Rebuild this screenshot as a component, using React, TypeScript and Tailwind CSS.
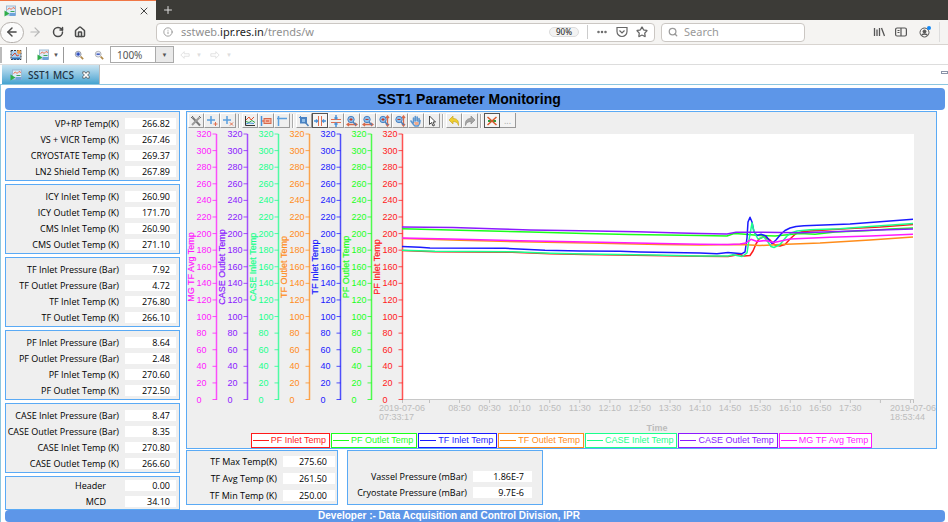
import { useState } from 'react';
import type { ReactNode } from 'react';
import { ArrowLeft, ArrowRight, RotateCw, House, Info, Ellipsis, Star, Search, Plus, X } from 'lucide-react';
import { clsx } from 'clsx';

const PANELS = [
  [['VP+RP Temp(K)', '266.82'], ['VS + VICR Temp (K)', '267.46'], ['CRYOSTATE Temp (K)', '269.37'], ['LN2 Shield Temp (K)', '267.89']],
  [['ICY Inlet Temp (K)', '260.90'], ['ICY Outlet Temp (K)', '171.70'], ['CMS Inlet Temp (K)', '260.90'], ['CMS Outlet Temp (K)', '271.10']],
  [['TF Inlet Pressure (Bar)', '7.92'], ['TF Outlet Pressure (Bar)', '4.72'], ['TF Inlet Temp (K)', '276.80'], ['TF Outlet Temp (K)', '266.10']],
  [['PF Inlet Pressure (Bar)', '8.64'], ['PF Outlet Pressure (Bar)', '2.48'], ['PF Inlet Temp (K)', '270.60'], ['PF Outlet Temp (K)', '272.50']],
  [['CASE Inlet Pressure (Bar)', '8.47'], ['CASE Outlet Pressure (Bar)', '8.35'], ['CASE Inlet Temp (K)', '270.80'], ['CASE Outlet Temp (K)', '266.60']],
];

// Traces are in the chart's own units, see the viewBox of <TrendChart>
const SERIES = [
  { name: 'PF Inlet Temp', color: '#ff1a1a', points: '402,250.5 435,251.7 512,252.2 550,253.7 585,254.5 652,255.5 700,256.3 728,256.6 735,255.2 740,254.5 744,256 750,255.5 753,251 756,244 759,239 764,236.5 770,240 775,245 780,246 785,244.5 790,239 796,233.500 802,231.800 810,231 850,228.5 880,227 913,224.5' },
  { name: 'PF Outlet Temp', color: '#1aff1a', points: '402,228.7 450,230 530,232 585,233.5 630,234.5 700,235.5 727,236 734,233.5 742,234 760,235.5 775,236 800,233.5 815,234.3 835,232 870,230.5 890,229 913,228' },
  { name: 'TF Inlet Temp', color: '#1a1aff', points: '402,246.5 420,247.3 430,248 505,248.3 545,250.3 580,251 620,251.3 640,252 700,252.9 717,253.7 728,252.5 742,253.7 745,252 747,238 748,222 750,217.3 752,222 754,232 757,235.5 761,234.3 766,236 769,240 772,243.5 776,240 781,234 785,230.500 790,228 796,226.500 804,225.700 850,224 870,222.5 890,221 913,219.3' },
  { name: 'TF Outlet Temp', color: '#ff8c1a', points: '402,238.6 460,240.2 520,241.8 600,243.2 660,244.4 700,245 740,244.5 760,245.5 780,244.5 820,243 870,240 913,237' },
  { name: 'CASE Inlet Temp', color: '#1aff8c', points: '402,250.3 435,251.3 512,251.8 550,253.3 585,254.1 652,255.1 700,256 728,256 733,254.7 742,256.5 747,253 749,240 752,223 754,232 758,239 764,237 768,242 771,246.500 774,247.5 780,244.5 787,236 791,233 797,231 810,229.7 840,228.8 870,226.5 913,223.5' },
  { name: 'CASE Outlet Temp', color: '#8c1aff', points: '402,227 427,227.3 453,227.6 500,229 530,230 580,230.7 637,231.7 680,233 700,233.5 727,234 736,232.3 760,232.3 800,232.8 840,231.4 870,230.3 913,229' },
  { name: 'MG TF Avg Temp', color: '#ff1aff', points: '402,238 450,239 520,240.8 600,242.3 660,243.5 700,244.3 728,244.6 740,244 746,243 751,239.3 757,241.5 765,240.5 774,242.5 790,239 830,237.3 870,236 913,234.3' },
];

const TEMPS = [0, 20, 40, 60, 80, 100, 120, 140, 160, 180, 200, 220, 240, 260, 280, 300, 320];
const TIMES = ['08:50', '09:30', '10:10', '10:50', '11:30', '12:10', '12:50', '13:30', '14:10', '14:50', '15:30', '16:10', '16:50', '17:30'];

const tempY = (t: number) => 399.5 - (t * 265.5) / 320;

function OpiIcon() {
  return (
    <svg viewBox="0 0 12 12" className="h-3 w-3 shrink-0">
      <rect x="2.500" y="1" width="9" height="9" fill="#dceaf7" stroke="#9db9d3" />
      <path d="M3.500 4.500 5.500 3l1.500 1.500 2-2 2 1" fill="none" stroke="#ee6a48" />
      <path d="M6.500 6.500h4" stroke="#3ba55c" />
      <rect x="5.500" y="8" width="6" height="3" fill="#6ea3da" />
      <path d="M0.500 5.500v6L5.500 8.500z" fill="#2fae4a" />
    </svg>
  );
}

function Reading({ label, value, id, box = 'w-[51px] pr-1.5' }: { label: string; value: string; id: string; box?: string }) {
  return (
    <div className="flex h-4 items-center justify-end gap-1.5">
      <label htmlFor={id} className="whitespace-nowrap">{label}</label>
      <input id={id} readOnly value={value} className={clsx('h-[11px] shrink-0 bg-white text-right outline-none', box)} />
    </div>
  );
}

function Zoomer({ sign, vertical }: { sign: string; vertical?: boolean }) {
  return (
    <>
      {vertical ? <path d="M9.500 1v10M8 3l1.500-2L11 3M8 9l1.500 2L11 9" stroke="#d8694b" strokeWidth="1.300" /> : <path d="M1 9.500h10M3 8 1 9.500 3 11M9 8l2 1.500L9 11" stroke="#d8694b" strokeWidth="1.300" />}
      <circle cx="5" cy="4.500" r="3.200" fill="#8fbde8" stroke="#4a83c4" />
      <path d="M7 7l3 3" stroke="#4a7fb8" strokeWidth="1.500" />
      <path d={sign === '+' ? 'M3.500 4.500h3M5 3v3' : 'M3.500 4.500h3'} stroke="#c0392b" />
    </>
  );
}

const TOOLS: { name: string; icon: ReactNode }[][] = [
  [
    { name: 'Configure', icon: <><path d="M2.500 2.500l7.500 8" stroke="#777" strokeWidth="2" /><path d="M9.500 2.500 2 10" stroke="#9a9a9a" strokeWidth="2" /><path d="M1 3l2-2M9 1l2 2" stroke="#666" /></> },
    { name: 'Add annotation', icon: <><path d="M5 1v8M1 5h8" stroke="#5aa0e0" strokeWidth="1.500" /><path d="M9.500 7v4M7.500 9h4" stroke="#e2704f" /></> },
    { name: 'Remove annotation', icon: <><path d="M5 1v8M1 5h8" stroke="#5aa0e0" strokeWidth="1.500" /><path d="M8 7.500l3 3M11 7.500l-3 3" stroke="#e2704f" /></> },
  ],
  [
    { name: 'Legend', icon: <><path d="M1.500 1v9.500H11" stroke="#333" /><path d="M2 5l3-3 2 3 3-3" stroke="#e2502c" /><path d="M2 6.500l3 1 3-2 3 2" stroke="#2fae4a" /><path d="M2 9l3-1 5 .500" stroke="#4a93d9" /></> },
    { name: 'Auto scale', icon: <><path d="M1.500 1v10" stroke="#4a93d9" strokeWidth="1.500" /><rect x="4" y="3.500" width="7" height="5" fill="#f3b29f" stroke="#d8694b" /><path d="M2 6h2M6 6h3" stroke="#d8492b" /></> },
    { name: 'Axes', icon: <path d="M2.500 1v10M1 3.500h10" stroke="#5aa0e0" strokeWidth="1.500" /> },
  ],
  [
    { name: 'Rubberband zoom', icon: <><path d="M1 2.500h7M2.500 1v7M8.500 2v6H2" stroke="#4a83c4" /><rect x="3.500" y="3.500" width="4" height="4" fill="#8fbde8" stroke="#4a83c4" /><path d="M7 7l3.500 4" stroke="#4a7fb8" strokeWidth="1.500" /></> },
    { name: 'Horizontal zoom', icon: <><path d="M4.500 1v10M7.500 1v10" stroke="#e2704f" /><path d="M0 6h3M2 4.500 3.500 6 2 7.500M12 6H9M10 4.500 8.500 6 10 7.500" stroke="#4a93d9" strokeWidth="1.500" /></> },
    { name: 'Vertical zoom', icon: <><path d="M1 4.500h10M1 7.500h10" stroke="#e2704f" /><path d="M6 0v4M4.500 2.500 6 4l1.500-1.500M6 12V8M4.500 9.500 6 8l1.500 1.500" stroke="#4a93d9" strokeWidth="1.500" /></> },
    { name: 'Zoom in horizontally', icon: <Zoomer sign="+" /> },
    { name: 'Zoom out horizontally', icon: <Zoomer sign="-" /> },
    { name: 'Zoom in vertically', icon: <Zoomer sign="+" vertical /> },
    { name: 'Zoom out vertically', icon: <Zoomer sign="-" vertical /> },
    { name: 'Pan', icon: <><path d="M3.500 7.500V3M5.300 6V1.500M7.200 6V2M9 7V3.500M1 6l2.500 3.500L5 11h3l1.500-2.500L10 5.500" stroke="#5b95cf" strokeWidth="1.600" strokeLinecap="round" /><path d="M4 7h4.500v3H5z" fill="#f0a98a" /></> },
    { name: 'Select', icon: <path d="M3.500 1v8.500l2-2 1.500 3.500 1.500-.700L7 7h2.500z" fill="#fff" stroke="#333" strokeWidth="0.900" /> },
  ],
  [
    { name: 'Undo', icon: <path d="M1 5l4-4v2.500c4 0 6 2 5.500 7C9.500 7.500 8 6.500 5 6.500V9z" fill="#f0cf2e" stroke="#c9a827" strokeWidth="0.700" /> },
    { name: 'Redo', icon: <path d="M11 5 7 1v2.500c-4 0-6 2-5.500 7C2.500 7.500 4 6.500 7 6.500V9z" fill="#a5a5a5" stroke="#8a8a8a" strokeWidth="0.700" /> },
  ],
];

function ToolButton({ name, active, onClick, children }: { name: string; active?: boolean; onClick?: () => void; children?: ReactNode }) {
  return (
    <button
      aria-label={name}
      onClick={onClick}
      className={clsx('flex h-[15px] w-4 items-center justify-center border', active ? 'border-[#555] bg-[#f6f6f6]' : 'border-t-white border-l-white border-r-[#999] border-b-[#999] bg-[#efefef]')}
    >
      {children}
    </button>
  );
}

function GraphToolbar() {
  const [mode, setMode] = useState('Horizontal zoom');
  return (
    <div className="flex h-[17px] items-center pl-px">
      {TOOLS.map((group, i) => (
        <div key={i} className="flex items-center">
          {group.map(t => (
            <ToolButton key={t.name} name={t.name} active={mode === t.name} onClick={() => setMode(t.name)}>
              <svg viewBox="0 0 12 12" fill="none" className="h-3 w-3 shrink-0">{t.icon}</svg>
            </ToolButton>
          ))}
          <span className="mx-0.5 h-3.5 w-0.5 border-l border-[#aaa] bg-white" />
        </div>
      ))}
      <ToolButton name="Clear marker" active>
        <svg viewBox="0 0 12 12" fill="none" className="h-3 w-3 shrink-0">
          <path d="M2 6h8" stroke="#2f9e3f" strokeWidth="2" />
          <path d="M1.500 2l9 8M10.500 2l-9 8" stroke="#d8582b" strokeWidth="1.500" />
        </svg>
      </ToolButton>
      <button className="flex h-[15px] w-4 items-center justify-center border-r border-b border-[#999] bg-[#f4f4f4] text-[9px] leading-none text-[#aaa]">...</button>
    </div>
  );
}

function TrendChart() {
  const axes = [...SERIES].reverse();
  return (
    <svg viewBox="187 129 749 304" className="block w-full font-['Liberation_Sans',sans-serif] text-[9px]" role="img" aria-label="SST1 temperatures">
      <rect x="402" y="134" width="512" height="265" fill="#fff" />
      {/* Y axes */}
      {axes.map((s, i) => {
        const x = 216.5 + i * 31;
        return (
          <g key={s.name} fill={s.color} stroke="none">
            <path d={`M${x} 134V400`} stroke={s.color} strokeWidth="1.500" opacity="0.750" />
            {TEMPS.map(t => (
              <g key={t}>
                <path d={`M${x - 4} ${tempY(t)}h4`} stroke={s.color} opacity="0.750" />
                <text x={x - 20} y={tempY(t) + 3}>{t}</text>
              </g>
            ))}
            <text transform={`translate(${x - 23} 267) rotate(-90)`} textAnchor="middle" stroke={s.color} strokeWidth="0.200">{s.name}</text>
          </g>
        );
      })}
      {/* Time axis */}
      <path d="M403 399.500H914" stroke="#c8c8c8" />
      {Array.from({ length: 17 }, (_, i) => <path key={i} d={`M${429.5 + i * 30.06} 400v3`} stroke="#c0c0c0" />)}
      <path d="M402.500 400v3M913.500 400v3" stroke="#c0c0c0" />
      <g fill="#bcbcbc">
        <text x="379" y="411">2019-07-06</text>
        <text x="379" y="420">07:33:17</text>
        {TIMES.map((t, i) => <text key={t} x={459.5 + i * 30.06} y="411" textAnchor="middle">{t}</text>)}
        <text x="890" y="411">2019-07-06</text>
        <text x="890" y="420">18:53:44</text>
        <text x="657" y="431" textAnchor="middle" fontWeight="bold">Time</text>
      </g>
      {/* Traces */}
      {SERIES.map(s => <polyline key={s.name} points={s.points} fill="none" stroke={s.color} strokeWidth="1.500" strokeLinejoin="round" />)}
    </svg>
  );
}

export default function App() {
  const [zoom, setZoom] = useState('100%');
  const panel = 'border border-[#5aaaf5] bg-[#efefef]';

  return (
    <div className="bg-white font-['Noto_Sans',sans-serif] text-[9px] leading-none text-black">
      {/* Browser tabs */}
      <div className="flex h-5 bg-[#3c3b37]">
        <div className="flex w-[156px] items-center gap-1 border-t border-[#f07746] bg-[#f5f4f2] px-1 text-[11px] text-[#444]">
          <OpiIcon />
          <span className="flex-1">WebOPI</span>
          <button aria-label="Close tab" className="pr-0.5"><X className="h-3 w-3" /></button>
        </div>
        <button aria-label="New tab" className="px-1.5 text-[#ddd]"><Plus className="h-3 w-3" /></button>
      </div>

      {/* Navigation */}
      <div className="flex h-[25px] items-center border-b border-[#d8d4d0] bg-[#f5f4f2] text-[#4a4a4a]">
        <button aria-label="Back" className="flex h-[21px] w-6 items-center justify-center rounded-full border border-[#b5b1ad] bg-[#fbfbfb]"><ArrowLeft className="h-3.5 w-3.5" strokeWidth={2.5} /></button>
        <button aria-label="Forward" className="ml-1 text-[#b5b5b5]"><ArrowRight className="h-3.5 w-3.5" /></button>
        <button aria-label="Reload" className="ml-2.5"><RotateCw className="h-3 w-3" strokeWidth={3} /></button>
        <button aria-label="Home" className="ml-2.5"><House className="h-3 w-3" strokeWidth={3} /></button>
        <div className="ml-[70px] flex h-[19px] w-[499px] min-w-0 items-center rounded-sm border border-[#cbc7c3] bg-white px-1.5 text-[11px] text-[#8f8f8f]">
          <Info className="h-2.5 w-2.5 shrink-0" />
          <a href="#" className="ml-2 flex-1 truncate leading-4">sstweb.<span className="text-[#222]">ipr.res.in</span>/trends/w</a>
          <span className="rounded-full border border-[#ddd] bg-[#f3f3f3] px-1.5 text-[8px] leading-[8px] font-medium text-[#333]">90%</span>
          <span className="mx-2 h-3.5 w-px bg-[#ccc]" />
          <Ellipsis className="h-3 w-3 text-[#666]" strokeWidth={3} />
          <svg viewBox="0 0 12 12" fill="none" stroke="#666" strokeWidth="1.200" className="ml-2 h-3 w-3"><path d="M1 1.500h10v4a5 5 0 0 1-10 0zM3.500 4.500 6 7l2.500-2.500" /></svg>
          <Star className="ml-2 h-3 w-3 text-[#666]" strokeWidth={2.5} />
        </div>
        <div className="ml-1.5 flex h-[19px] w-[144px] items-center gap-1.5 rounded-sm border border-[#cbc7c3] bg-white px-1.5 text-[#999]">
          <Search className="h-2.5 w-2.5 shrink-0" strokeWidth={3} />
          <input aria-label="Search" placeholder="Search" className="w-full text-[11px] leading-4 outline-none placeholder:text-[#999]" />
        </div>
        <div className="mr-2 ml-auto flex items-center">
          <svg viewBox="0 0 12 12" fill="none" stroke="#555" strokeWidth="1.300" className="h-3 w-3"><path d="M1.500 2v8M4 3.500V10M6.500 2v8M8.500 2l3 8" /></svg>
          <svg viewBox="0 0 12 12" fill="none" stroke="#555" strokeWidth="1.200" className="ml-2.5 h-3 w-3"><rect x="0.600" y="2" width="10.800" height="8" rx="1.500" /><path d="M2.500 4.500h2M2.500 6.500h2M6 2v8" /></svg>
          <svg viewBox="0 0 12 12" fill="none" stroke="#555" className="ml-3 h-3 w-3"><circle cx="5.500" cy="6.500" r="4.500" /><circle cx="5.500" cy="5.500" r="1.500" fill="#555" /><path d="M2.500 9.500c1-2 5-2 6 0" strokeWidth="1.600" /><circle cx="10" cy="2" r="2" fill="#1187f5" stroke="none" /></svg>
          <span className="ml-2 h-5 w-px bg-[#ddd]" />
        </div>
      </div>

      {/* OPI toolbar */}
      <div className="flex h-5 items-center border-b border-[#ddd] text-[#555]">
        <span className="h-4 w-0.5 bg-[#bbb]" />
        <button aria-label="Open OPI" className="ml-2"><svg viewBox="0 0 12 12" className="h-3 w-3"><rect x="1" y="1.500" width="10" height="9" fill="#a9cff0" stroke="#333" strokeDasharray="2 1" /><path d="M2 7l3-3 2 3 2-1" fill="none" stroke="#d8492b" /><path d="M2 9.500h8" stroke="#2f6fb5" strokeWidth="2" /><circle cx="9" cy="3" r="2" fill="#f0a04a" /></svg></button>
        <span className="ml-1 h-4 w-px bg-[#999]" />
        <button aria-label="Top OPIs" className="ml-2.5 flex items-center gap-1"><OpiIcon /><span className="text-[6px]">▼</span></button>
        <span className="ml-1 h-4 w-px bg-[#999]" />
        <button aria-label="Zoom in" className="ml-2.5"><svg viewBox="0 0 12 12" fill="none" className="h-2.5 w-2.5"><circle cx="5" cy="5" r="3.500" fill="#b9c8f2" stroke="#999" /><path d="M3 5h4M5 3v4" stroke="#2342b5" strokeWidth="1.500" /><path d="M8 8l3 3" stroke="#b08a4a" strokeWidth="2" /></svg></button>
        <button aria-label="Zoom out" className="ml-2.5"><svg viewBox="0 0 12 12" fill="none" className="h-2.5 w-2.5"><circle cx="5" cy="5" r="3.500" fill="#e4e8f5" stroke="#aaa" /><path d="M3 5h4" stroke="#2342b5" strokeWidth="1.500" /><path d="M8 8l3 3" stroke="#b08a4a" strokeWidth="2" /></svg></button>
        <div className="relative ml-1.5 flex h-[17px] w-16 border border-[#aaa]">
          <select aria-label="Zoom level" value={zoom} onChange={e => setZoom(e.target.value)} className="w-full appearance-none bg-white pl-1.5 text-[10px] leading-3 outline-none">
            <option>100%</option>
            <option>200%</option>
          </select>
          <span className="pointer-events-none absolute inset-y-0 right-0 flex w-[18px] items-center justify-center border-l border-[#aaa] bg-[#e9e9e9] text-[6px]">▼</span>
        </div>
        <div className="ml-1.5 flex items-center gap-2 text-[6px] text-[#ddd]">
          {['Back', 'Forward'].map(d => (
            <button key={d} aria-label={`OPI ${d}`} className="flex items-center gap-1.5">
              <svg viewBox="0 0 12 12" fill="none" stroke="#ddd" className={clsx('h-2.5 w-2.5', d === 'Forward' && 'rotate-180')}><path d="M1 6l4-4v2.500h6v3H5V10z" /></svg>
              ▼
            </button>
          ))}
        </div>
      </div>

      {/* OPI tab */}
      <div className="flex h-5 items-start justify-between border-b border-[#8cc6e0] pl-0.5">
        <div className="flex h-[19px] w-[98px] items-center gap-1.5 border-r border-[#bbb] bg-gradient-to-b from-[#c8e4f2] to-[#43a3d0] pl-2 text-[10px] font-medium text-[#1d3344]">
          <OpiIcon />
          SST1 MCS
          <button aria-label="Close SST1 MCS"><svg viewBox="0 0 10 10" className="ml-0.5 h-2 w-2"><path d="M1 1h2.500L5 3l1.500-2H9v2L7 5l2 2v2H6.500L5 7 3.500 9H1V7l2-2-2-2z" fill="#fff" stroke="#333" strokeWidth="0.800" /></svg></button>
        </div>
        <button aria-label="Minimize" className="mt-1.5 h-[3px] w-[7px] border border-[#8a93a8]" />
      </div>

      <div className="border-l border-[#8cc6e0] pt-[3px] pr-[3px] pl-1">
        <h1 className="rounded bg-[#5d96e8] pr-3 text-center font-['Liberation_Sans',sans-serif] text-[14px] leading-[22px] font-bold text-black">SST1 Parameter Monitoring</h1>

        <div className="mt-px flex gap-1.5 pr-2 font-['Open_Sans','Noto_Sans',sans-serif] font-medium">
          {/* Readings */}
          <div className="flex w-[175px] shrink-0 flex-col gap-[3px]">
            {PANELS.map((rows, i) => (
              <section key={i} className={clsx(panel, 'pt-[3px] pr-[3px] pb-px')}>
                {rows.map(([label, value]) => <Reading key={label} id={label} label={label} value={value} />)}
              </section>
            ))}
            <section className={clsx(panel, 'pr-[3px]')}>
              {[['Header', '0.00'], ['MCD', '34.10']].map(([label, value]) => (
                <div key={label} className="flex h-4 items-center justify-end gap-[19px]">
                  <label htmlFor={label}>{label}</label>
                  <input id={label} readOnly value={value} className="h-[11px] w-[51px] bg-white pr-1.5 text-right outline-none" />
                </div>
              ))}
            </section>
          </div>

          <div className="min-w-0 flex-1">
            {/* Trend */}
            <section className={panel}>
              <GraphToolbar />
              <TrendChart />
              <ul className="flex justify-center gap-px font-['Liberation_Sans',sans-serif] font-normal">
                {SERIES.map(s => (
                  <li key={s.name} className="flex h-[15px] items-center border bg-white pr-[3px] pl-px whitespace-nowrap" style={{ color: s.color, borderColor: s.color }}>
                    <span className="mr-0.5 h-px w-4 bg-current" />
                    {s.name}
                  </li>
                ))}
              </ul>
            </section>

            <div className="mt-px flex gap-[9px]">
              <section className={clsx(panel, 'w-[152px] pt-0.5 pr-0.5 pb-px')}>
                <div className="flex flex-col gap-px">
                  {[['TF Max Temp(K)', '275.60'], ['TF Avg Temp (K)', '261.50'], ['TF Min Temp (K)', '250.00']].map(([label, value]) => (
                    <Reading key={label} id={label} label={label} value={value} box="w-[52px] pr-2" />
                  ))}
                </div>
              </section>
              <section className={clsx(panel, 'flex w-[196px] flex-col justify-end pr-2.5 pb-1')}>
                <Reading id="vassel" label="Vassel Pressure (mBar)" value="1.86E-7" box="w-[59px] pr-2" />
                <Reading id="cryostate" label="Cryostate Pressure (mBar)" value="9.7E-6" box="w-[59px] pr-2" />
              </section>
            </div>
          </div>
        </div>

        <footer className="rounded bg-[#5d96e8] pr-[52px] text-center font-['Liberation_Sans',sans-serif] text-[10px] leading-3 font-bold text-white">
          Developer :- Data Acquisition and Control Division, IPR
        </footer>
      </div>
    </div>
  );
}
